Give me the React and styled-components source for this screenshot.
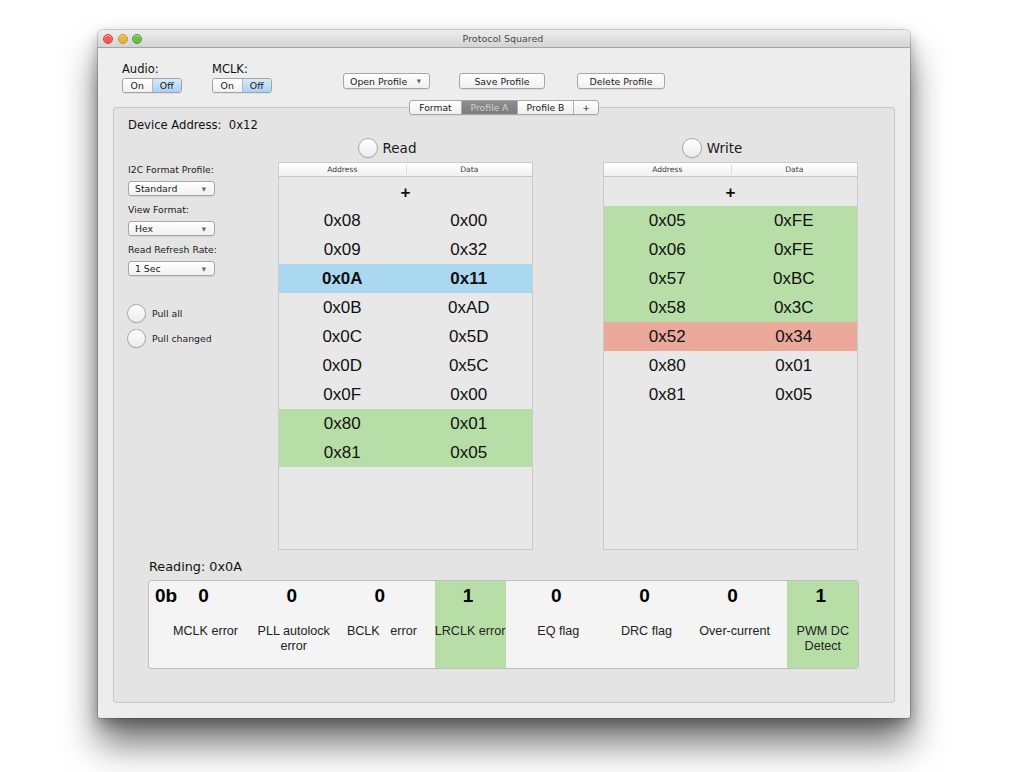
import React from 'react';
import styled, { createGlobalStyle } from 'styled-components';

const Global = createGlobalStyle`
  html, body { margin: 0; padding: 0; background: #ffffff; }
  body { font-family: "DejaVu Sans", "Noto Sans", sans-serif; color: #1a1a1a; }
  * { box-sizing: border-box; }
`;

const Page = styled.div`
  width: 1028px;
  height: 772px;
  overflow: hidden;
  padding: 30px 0 0 98px;
`;

const Window = styled.div`
  width: 812px;
  height: 688px;
  display: flex;
  flex-direction: column;
  background: #ededed;
  border-radius: 5px 5px 2px 2px;
  box-shadow: 0 26px 36px rgba(0, 0, 0, 0.55), 0 6px 14px rgba(0, 0, 0, 0.3), 0 0 0 1px rgba(0, 0, 0, 0.16);
`;

const TitleBar = styled.div`
  height: 18px;
  flex: none;
  display: grid;
  grid-template-columns: 1fr auto 1fr;
  align-items: center;
  padding: 0 7px 0 5px;
  background: linear-gradient(#ededed, #d4d4d4);
  border-bottom: 1px solid #a4a4a4;
  border-radius: 5px 5px 0 0;
`;

const Lights = styled.div`
  display: flex;
  gap: 4.5px;
`;

const Light = styled.span`
  width: 10px;
  height: 10px;
  border-radius: 50%;
  background: ${(p) => p.c};
  border: 1px solid ${(p) => p.b};
  box-shadow: inset 0 1px 1px rgba(255, 255, 255, 0.5);
`;

const Title = styled.div`
  font-size: 9.5px;
  color: #4a4a4a;
`;

const Body = styled.div`
  flex: 1;
  display: flex;
  flex-direction: column;
  padding: 0 15px 15px 15px;
`;

const TopBar = styled.div`
  height: 59px;
  flex: none;
  display: flex;
  align-items: flex-start;
  padding-left: 9px;
`;

const ToggleGroup = styled.div`
  display: flex;
  flex-direction: column;
  margin-top: 14px;
  margin-left: ${(p) => p.ml || 0}px;
`;

const ToggleLabel = styled.div`
  font-size: 11.5px;
  line-height: 14px;
  color: #111;
`;

const Segmented = styled.div`
  margin-top: 2px;
  width: 60px;
  height: 15px;
  display: flex;
  border: 1px solid #a3a3a3;
  border-radius: 3px;
  overflow: hidden;
  box-shadow: 0 1px 0 rgba(0, 0, 0, 0.06);
`;

const Segment = styled.div`
  flex: 1;
  display: flex;
  align-items: center;
  justify-content: center;
  font-size: 9.4px;
  color: #1a1a1a;
  background: ${(p) => (p.on ? 'linear-gradient(#d6eafc, #a9d0f5)' : 'linear-gradient(#ffffff, #f0f0f0)')};
  & + & {
    border-left: 1px solid #b8b8b8;
  }
`;

const PushButton = styled.div`
  margin-top: 25px;
  margin-left: ${(p) => p.ml}px;
  width: ${(p) => p.w}px;
  height: 16px;
  display: flex;
  align-items: center;
  justify-content: ${(p) => (p.popup ? 'space-between' : 'center')};
  padding: ${(p) => (p.popup ? '0 8px 0 6px' : '0')};
  border: 1px solid #a6a6a6;
  border-radius: 3px;
  background: linear-gradient(#ffffff, #f0f0f0);
  box-shadow: 0 1px 0 rgba(0, 0, 0, 0.07);
  font-size: 9.4px;
  color: #1a1a1a;
`;

const Arrow = styled.span`
  font-size: 5.5px;
  color: #666;
`;

const TabBox = styled.div`
  flex: 1;
  display: flex;
  flex-direction: column;
  border: 1px solid #c6c6c6;
  border-radius: 3px;
  background: #e4e4e4;
`;

const TabStrip = styled.div`
  align-self: center;
  margin-top: -8px;
  height: 15px;
  display: flex;
  border: 1px solid #a8a8a8;
  border-radius: 3px;
  overflow: hidden;
  background: linear-gradient(#ffffff, #efefef);
  box-shadow: 0 1px 0 rgba(0, 0, 0, 0.06);
`;

const Tab = styled.div`
  width: ${(p) => p.w}px;
  display: flex;
  align-items: center;
  justify-content: center;
  font-size: 9.2px;
  color: ${(p) => (p.active ? '#d0d0d0' : '#1a1a1a')};
  background: ${(p) => (p.active ? 'linear-gradient(#8e8e8e, #7c7c7c)' : 'transparent')};
  & + & {
    border-left: 1px solid #b0b0b0;
  }
`;

const Content = styled.div`
  display: flex;
  flex-direction: column;
  padding: 0 14px;
`;

const DeviceAddress = styled.div`
  margin-top: 2px;
  font-size: 11.6px;
  line-height: 16px;
  color: #111;
`;

const MainRow = styled.div`
  display: flex;
  align-items: flex-start;
`;

const Sidebar = styled.div`
  width: 150px;
  display: flex;
  flex-direction: column;
  padding-top: 31px;
`;

const FieldLabel = styled.div`
  font-size: 9.3px;
  line-height: 12px;
  color: #1a1a1a;
  margin-top: ${(p) => p.mt || 0}px;
`;

const Popup = styled.div`
  margin-top: 5px;
  width: 87px;
  height: 15px;
  display: flex;
  align-items: center;
  justify-content: space-between;
  padding: 0 8px 0 6px;
  border: 1px solid #a6a6a6;
  border-radius: 3px;
  background: linear-gradient(#ffffff, #f0f0f0);
  box-shadow: 0 1px 0 rgba(0, 0, 0, 0.07);
  font-size: 9.3px;
  color: #1a1a1a;
`;

const RadioRow = styled.div`
  display: flex;
  align-items: center;
  gap: ${(p) => p.gap || 6}px;
  margin-top: ${(p) => p.mt || 0}px;
  margin-left: ${(p) => p.ml || 0}px;
`;

const RadioCircle = styled.span`
  width: ${(p) => p.size || 19}px;
  height: ${(p) => p.size || 19}px;
  flex: none;
  border-radius: 50%;
  border: 1px solid #a9a9a9;
  background: linear-gradient(#ffffff, #ececec);
  box-shadow: 0 1px 1px rgba(0, 0, 0, 0.08);
`;

const RadioText = styled.span`
  font-size: ${(p) => p.fs || 9.3}px;
  color: #1a1a1a;
`;

const TableColumn = styled.div`
  width: 255px;
  margin-left: ${(p) => p.ml || 0}px;
  display: flex;
  flex-direction: column;
`;

const TableCaption = styled.div`
  height: 29px;
  display: flex;
  align-items: center;
  justify-content: center;
  padding-right: 37px;
`;

const Table = styled.div`
  height: 388px;
  border: 1px solid #cbcbcb;
  background: #e8e8e8;
  display: flex;
  flex-direction: column;
`;

const TableHead = styled.div`
  height: 14px;
  flex: none;
  display: grid;
  grid-template-columns: 1fr 1fr;
  background: linear-gradient(#ffffff, #f1f1f1);
  border-bottom: 1px solid #c4c4c4;
`;

const HeadCell = styled.div`
  font-size: 7.6px;
  line-height: 13px;
  text-align: center;
  color: #3a3a3a;
  & + & {
    border-left: 1px solid #dadada;
    margin: 2px 0;
    line-height: 9px;
  }
`;

const PlusRow = styled.div`
  height: 29px;
  flex: none;
  display: flex;
  align-items: center;
  justify-content: center;
  padding-top: 3px;
  font-family: "Liberation Sans", Arial, sans-serif;
  font-weight: bold;
  font-size: 17px;
  color: #111;
`;

const Row = styled.div`
  height: 29px;
  flex: none;
  display: grid;
  grid-template-columns: 1fr 1fr;
  align-items: center;
  background: ${(p) => p.bg || 'transparent'};
  font-family: "Liberation Sans", Arial, sans-serif;
  font-size: 17px;
  font-weight: ${(p) => (p.bold ? 'bold' : 'normal')};
  color: #111;
`;

const Cell = styled.div`
  text-align: center;
`;

const ReadingLabel = styled.div`
  margin-top: 9px;
  padding-left: 21px;
  font-size: 12.8px;
  line-height: 15px;
  color: #111;
`;

const BitsPanel = styled.div`
  margin-top: 6px;
  margin-left: 20px;
  width: 711px;
  height: 89px;
  display: flex;
  padding-left: 6px;
  border: 1px solid #bfbfbf;
  border-radius: 3px;
  background: #f4f4f4;
  overflow: hidden;
`;

const BitPrefix = styled.div`
  width: 15px;
  flex: none;
  white-space: nowrap;
  margin-top: 4px;
  font-family: "Liberation Sans", Arial, sans-serif;
  font-weight: bold;
  font-size: 19px;
  line-height: 22px;
  color: #000;
`;

const BitCell = styled.div`
  width: 71px;
  flex: none;
  margin-right: 17.2px;
  display: flex;
  flex-direction: column;
  align-items: center;
  background: ${(p) => (p.on ? '#b8dea8' : 'transparent')};
  &:last-child { margin-right: 0; }
`;

const BitValue = styled.div`
  margin-top: 4px;
  padding-right: 4px;
  font-family: "Liberation Sans", Arial, sans-serif;
  font-weight: bold;
  font-size: 19px;
  line-height: 22px;
  color: #000;
`;

const BitName = styled.div`
  margin-top: 17px;
  font-family: "Liberation Sans", Arial, sans-serif;
  font-size: 12.6px;
  line-height: 15px;
  text-align: center;
  white-space: pre;
  color: #222;
`;

const readRows = [
  ['0x08', '0x00'],
  ['0x09', '0x32'],
  ['0x0A', '0x11', '#abd8f1', true],
  ['0x0B', '0xAD'],
  ['0x0C', '0x5D'],
  ['0x0D', '0x5C'],
  ['0x0F', '0x00'],
  ['0x80', '0x01', '#b8dea8'],
  ['0x81', '0x05', '#b8dea8'],
];

const writeRows = [
  ['0x05', '0xFE', '#b8dea8'],
  ['0x06', '0xFE', '#b8dea8'],
  ['0x57', '0xBC', '#b8dea8'],
  ['0x58', '0x3C', '#b8dea8'],
  ['0x52', '0x34', '#eba99c'],
  ['0x80', '0x01'],
  ['0x81', '0x05'],
];

const bits = [
  ['0', 'MCLK error'],
  ['0', 'PLL autolock\nerror'],
  ['0', 'BCLK   error'],
  ['1', 'LRCLK error', true],
  ['0', 'EQ flag'],
  ['0', 'DRC flag'],
  ['0', 'Over-current'],
  ['1', 'PWM DC\nDetect', true],
];

function RegisterTable({ title, rows, ml }) {
  return (
    <TableColumn ml={ml}>
      <TableCaption>
        <RadioRow gap={5}>
          <RadioCircle size={20} />
          <RadioText fs={13.5}>{title}</RadioText>
        </RadioRow>
      </TableCaption>
      <Table>
        <TableHead>
          <HeadCell>Address</HeadCell>
          <HeadCell>Data</HeadCell>
        </TableHead>
        <PlusRow>+</PlusRow>
        {rows.map(([a, d, bg, bold], i) => (
          <Row key={i} bg={bg} bold={bold}>
            <Cell>{a}</Cell>
            <Cell>{d}</Cell>
          </Row>
        ))}
      </Table>
    </TableColumn>
  );
}

export default function App() {
  return (
    <Page>
      <Global />
      <Window>
        <TitleBar>
          <Lights>
            <Light c="#ee5d55" b="#c9473f" />
            <Light c="#e6b33c" b="#c29531" />
            <Light c="#63c248" b="#4b9e36" />
          </Lights>
          <Title>Protocol Squared</Title>
          <span />
        </TitleBar>
        <Body>
          <TopBar>
            <ToggleGroup>
              <ToggleLabel>Audio:</ToggleLabel>
              <Segmented>
                <Segment>On</Segment>
                <Segment on>Off</Segment>
              </Segmented>
            </ToggleGroup>
            <ToggleGroup ml={30}>
              <ToggleLabel>MCLK:</ToggleLabel>
              <Segmented>
                <Segment>On</Segment>
                <Segment on>Off</Segment>
              </Segmented>
            </ToggleGroup>
            <PushButton ml={71} w={87} popup>
              <span>Open Profile</span>
              <Arrow>▼</Arrow>
            </PushButton>
            <PushButton ml={29} w={86}>Save Profile</PushButton>
            <PushButton ml={32} w={88}>Delete Profile</PushButton>
          </TopBar>
          <TabBox>
            <TabStrip>
              <Tab w={51}>Format</Tab>
              <Tab w={56} active>Profile A</Tab>
              <Tab w={56}>Profile B</Tab>
              <Tab w={25}>+</Tab>
            </TabStrip>
            <Content>
              <DeviceAddress>Device Address:&nbsp; 0x12</DeviceAddress>
              <MainRow>
                <Sidebar>
                  <FieldLabel>I2C Format Profile:</FieldLabel>
                  <Popup>
                    <span>Standard</span>
                    <Arrow>▼</Arrow>
                  </Popup>
                  <FieldLabel mt={8}>View Format:</FieldLabel>
                  <Popup>
                    <span>Hex</span>
                    <Arrow>▼</Arrow>
                  </Popup>
                  <FieldLabel mt={8}>Read Refresh Rate:</FieldLabel>
                  <Popup>
                    <span>1 Sec</span>
                    <Arrow>▼</Arrow>
                  </Popup>
                  <RadioRow mt={28} ml={-1}>
                    <RadioCircle />
                    <RadioText>Pull all</RadioText>
                  </RadioRow>
                  <RadioRow mt={6} ml={-1}>
                    <RadioCircle />
                    <RadioText>Pull changed</RadioText>
                  </RadioRow>
                </Sidebar>
                <RegisterTable title="Read" rows={readRows} />
                <RegisterTable title="Write" rows={writeRows} ml={70} />
              </MainRow>
              <ReadingLabel>Reading: 0x0A</ReadingLabel>
              <BitsPanel>
                <BitPrefix>0b</BitPrefix>
                {bits.map(([v, name, on], i) => (
                  <BitCell key={i} on={on}>
                    <BitValue>{v}</BitValue>
                    <BitName>{name}</BitName>
                  </BitCell>
                ))}
              </BitsPanel>
            </Content>
          </TabBox>
        </Body>
      </Window>
    </Page>
  );
}
